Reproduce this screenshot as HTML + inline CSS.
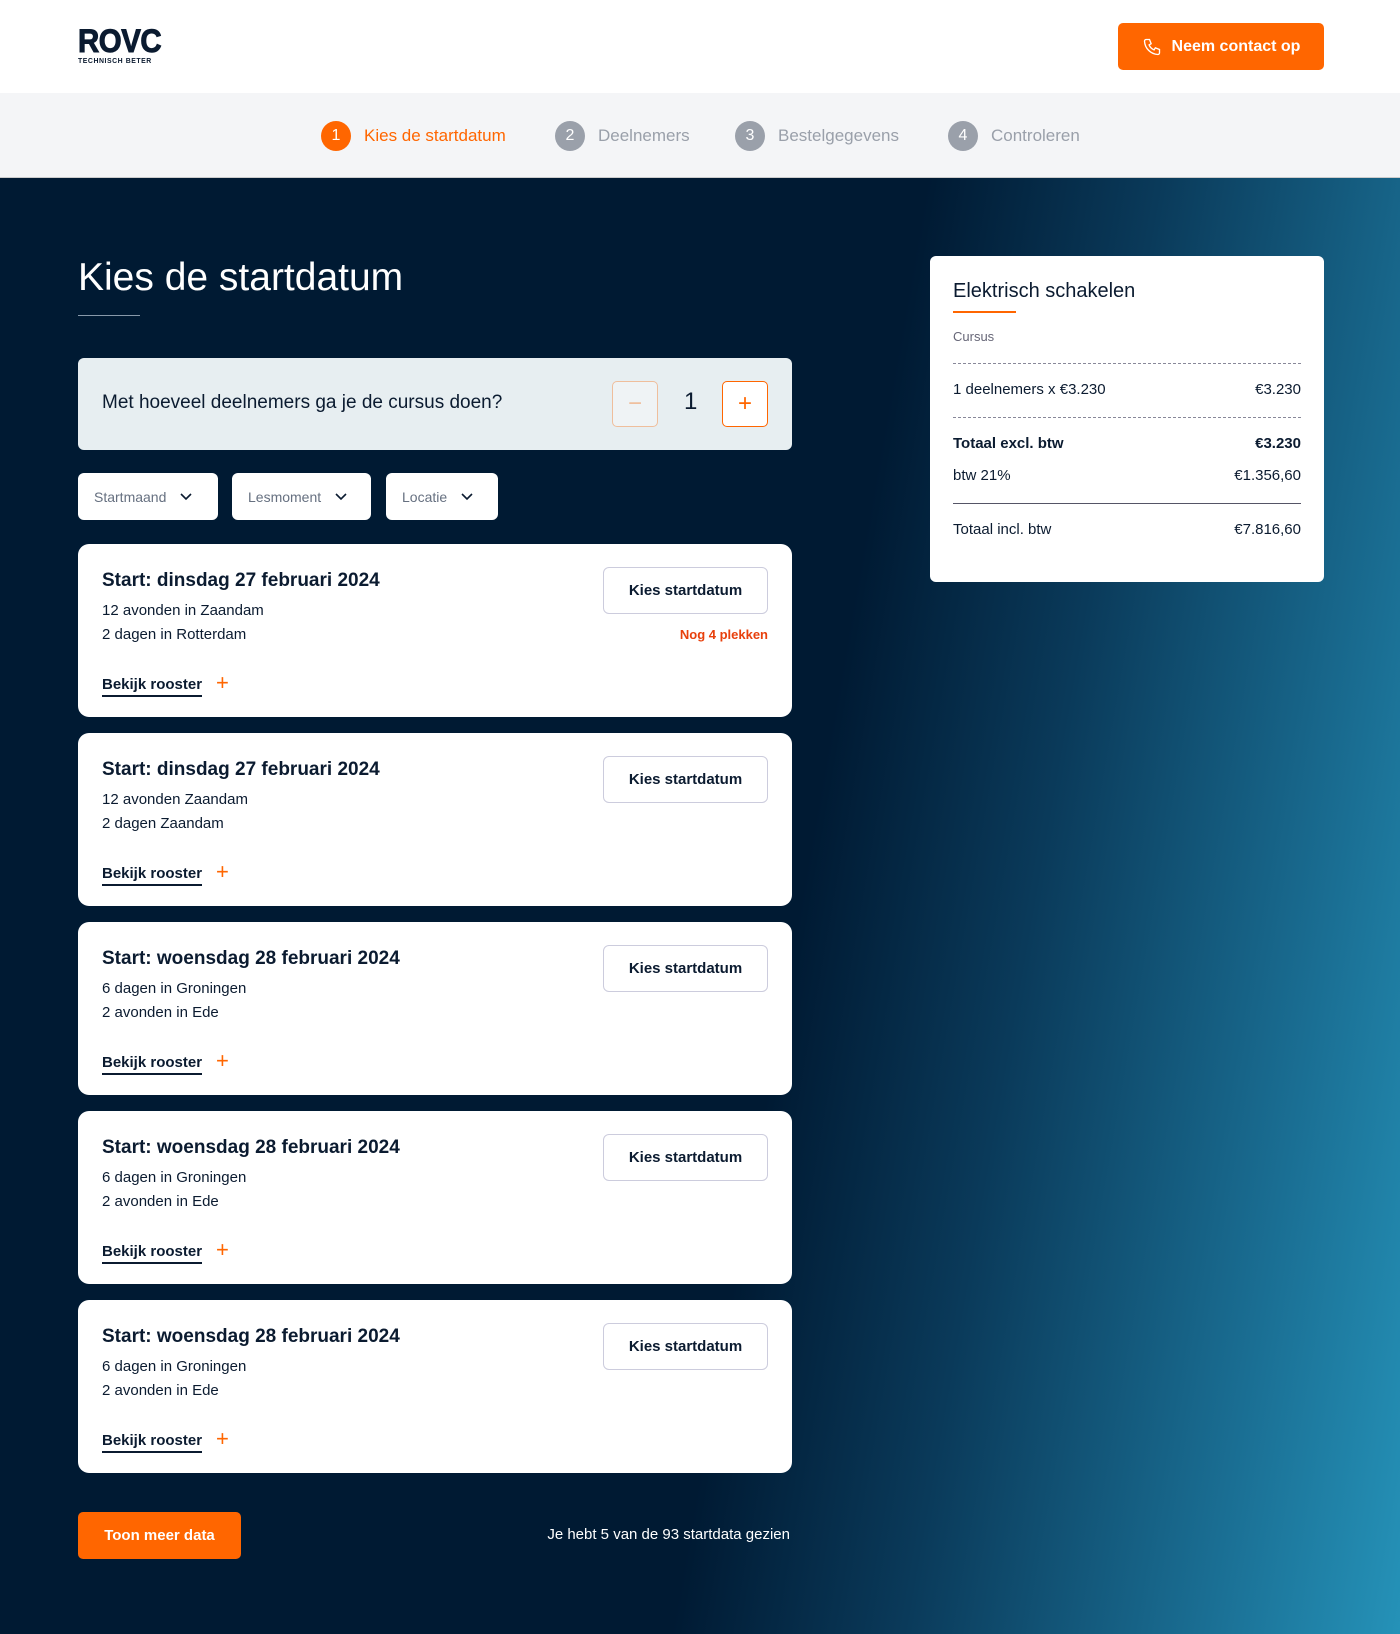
<!DOCTYPE html>
<html><head><meta charset="utf-8"><style>
*{box-sizing:border-box;margin:0;padding:0}
body{width:1400px;height:1634px;overflow:hidden;font-family:"Liberation Sans",sans-serif;color:#0b1b30;position:relative;background:#001a33}
.hdr{position:absolute;left:0;top:0;width:1400px;height:93px;background:#fff}
.logo{position:absolute;left:78px;top:26px;font-weight:900;font-size:32px;color:#0b1b30;line-height:30px;transform:scaleX(0.92);transform-origin:left;-webkit-text-stroke:1px #0b1b30;letter-spacing:-0.5px}
.logo small{display:block;font-size:7.5px;letter-spacing:.6px;font-weight:700;line-height:9px;-webkit-text-stroke:0}
.cbtn{position:absolute;left:1118px;top:23px;width:206px;height:47px;background:#ff6600;border-radius:5px;color:#fff;font-size:16px;font-weight:700;display:flex;align-items:center;justify-content:center;gap:10px}
.steps{position:absolute;left:0;top:93px;width:1400px;height:85px;background:#f4f5f7;border-bottom:1px solid #ccc}
.st{position:absolute;top:28px;display:flex;align-items:center;font-size:17px;color:#9aa0aa}
.st b{width:30px;height:30px;border-radius:50%;background:#9aa0aa;color:#fff;display:inline-flex;align-items:center;justify-content:center;font-weight:400;font-size:16px;margin-right:13px}
.main{position:absolute;left:0;top:178px;width:1400px;height:1456px;background:linear-gradient(100deg,#001a33 0%,#001a33 56%,#0a3a5a 70%,#1a6e93 88%,#2592b8 100%)}
h1{position:absolute;left:78px;top:256px;font-size:39px;font-weight:400;color:#fff}
.ul{position:absolute;left:78px;top:315px;width:62px;height:1px;background:#8899aa}
.q{position:absolute;left:78px;top:358px;width:714px;height:92px;background:#e7eef1;border-radius:6px}
.q span{position:absolute;left:24px;top:34px;font-size:19px}
.pm{position:absolute;top:23px;width:46px;height:46px;border:1px solid #ff6600;border-radius:5px;background:#fff;color:#ff6600;font-size:24px;display:flex;align-items:center;justify-content:center}
.f{position:absolute;top:473px;height:47px;background:#fff;border-radius:6px;font-size:14px;color:#667080;display:flex;align-items:center;padding-left:16px;gap:14px}
.card{position:absolute;left:78px;width:714px;height:173px;background:#fff;border-radius:11px}
.card h3{position:absolute;left:24px;top:26px;font-size:19px;font-weight:700}
.card p{position:absolute;left:24px;font-size:15px}
.card .br{position:absolute;left:24px;top:132px;font-size:15px;font-weight:700;border-bottom:2px solid #0b1b30;padding-bottom:2px}
.card .plus{position:absolute;left:138px;top:126px;color:#ff6600;font-size:22px}
.card .kb{position:absolute;left:525px;top:23px;width:165px;height:47px;border:1px solid #ccd;border-radius:6px;display:flex;align-items:center;justify-content:center;font-size:15px;font-weight:700}
.card .nog{position:absolute;right:24px;top:83px;color:#e8400c;font-size:13px;font-weight:700}
.side{position:absolute;left:930px;top:256px;width:394px;height:326px;background:#fff;border-radius:6px;font-size:15px}
.row{position:absolute;left:23px;right:23px;display:flex;justify-content:space-between}
.dash{position:absolute;left:23px;right:23px;border-top:1px dashed #889}
.tm{position:absolute;left:78px;top:1512px;width:163px;height:47px;background:#ff6600;border-radius:5px;color:#fff;font-size:15px;font-weight:700;display:flex;align-items:center;justify-content:center}
</style></head><body>
<div class="hdr">
<div class="logo">ROVC<small>TECHNISCH BETER</small></div>
<div class="cbtn"><svg width="20" height="20" viewBox="0 0 24 24" fill="none" stroke="#fff" stroke-width="1.6"><path d="M5 3h4l2 5-2.5 1.5a11 11 0 0 0 6 6L16 13l5 2v4a2 2 0 0 1-2 2A17 17 0 0 1 3 5a2 2 0 0 1 2-2z"/></svg>Neem contact op</div>
</div>
<div class="steps">
<div class="st" style="left:321px;color:#ff6600"><b style="background:#ff6600">1</b>Kies de startdatum</div>
<div class="st" style="left:555px"><b>2</b>Deelnemers</div>
<div class="st" style="left:735px"><b>3</b>Bestelgegevens</div>
<div class="st" style="left:948px"><b>4</b>Controleren</div>
</div>
<div class="main"></div>
<h1>Kies de startdatum</h1><div class="ul"></div>
<div class="q"><span>Met hoeveel deelnemers ga je de cursus doen?</span>
<div class="pm" style="left:534px;opacity:.35">−</div>
<div style="position:absolute;left:606px;top:30px;font-size:24px">1</div>
<div class="pm" style="left:644px">+</div></div>
<div class="f" style="left:78px;width:140px">Startmaand <svg width="12" height="8" viewBox="0 0 12 8"><path d="M1 1l5 5 5-5" fill="none" stroke="#0b1b30" stroke-width="1.6"/></svg></div>
<div class="f" style="left:232px;width:139px">Lesmoment <svg width="12" height="8" viewBox="0 0 12 8"><path d="M1 1l5 5 5-5" fill="none" stroke="#0b1b30" stroke-width="1.6"/></svg></div>
<div class="f" style="left:386px;width:112px">Locatie <svg width="12" height="8" viewBox="0 0 12 8"><path d="M1 1l5 5 5-5" fill="none" stroke="#0b1b30" stroke-width="1.6"/></svg></div>

<div class="card" style="top:544px"><h3>Start: dinsdag 27 februari 2024</h3><p style="top:58px">12 avonden in Zaandam</p><p style="top:82px">2 dagen in Rotterdam</p><span class="br">Bekijk rooster</span><span class="plus">+</span><div class="kb">Kies startdatum</div><div class="nog">Nog 4 plekken</div></div>
<div class="card" style="top:733px"><h3>Start: dinsdag 27 februari 2024</h3><p style="top:58px">12 avonden Zaandam</p><p style="top:82px">2 dagen Zaandam</p><span class="br">Bekijk rooster</span><span class="plus">+</span><div class="kb">Kies startdatum</div></div>
<div class="card" style="top:922px"><h3>Start: woensdag 28 februari 2024</h3><p style="top:58px">6 dagen in Groningen</p><p style="top:82px">2 avonden in Ede</p><span class="br">Bekijk rooster</span><span class="plus">+</span><div class="kb">Kies startdatum</div></div>
<div class="card" style="top:1111px"><h3>Start: woensdag 28 februari 2024</h3><p style="top:58px">6 dagen in Groningen</p><p style="top:82px">2 avonden in Ede</p><span class="br">Bekijk rooster</span><span class="plus">+</span><div class="kb">Kies startdatum</div></div>
<div class="card" style="top:1300px"><h3>Start: woensdag 28 februari 2024</h3><p style="top:58px">6 dagen in Groningen</p><p style="top:82px">2 avonden in Ede</p><span class="br">Bekijk rooster</span><span class="plus">+</span><div class="kb">Kies startdatum</div></div>

<div class="tm">Toon meer data</div>
<div style="position:absolute;right:610px;top:1526px;color:#fff;font-size:15px">Je hebt 5 van de 93 startdata gezien</div>

<div class="side">
<div style="position:absolute;left:23px;top:24px;font-size:20px">Elektrisch schakelen</div>
<div style="position:absolute;left:23px;top:55px;width:63px;height:2px;background:#ff6600"></div>
<div style="position:absolute;left:23px;top:73px;font-size:13px;color:#667">Cursus</div>
<div class="dash" style="top:107px"></div>
<div class="row" style="top:125px"><span>1 deelnemers x €3.230</span><span>€3.230</span></div>
<div class="dash" style="top:161px"></div>
<div class="row" style="top:179px;font-weight:700"><span>Totaal excl. btw</span><span>€3.230</span></div>
<div class="row" style="top:211px"><span>btw 21%</span><span>€1.356,60</span></div>
<div style="position:absolute;left:23px;right:23px;top:247px;border-top:1px solid #556"></div>
<div class="row" style="top:265px"><span>Totaal incl. btw</span><span>€7.816,60</span></div>
</div>
</body></html>
